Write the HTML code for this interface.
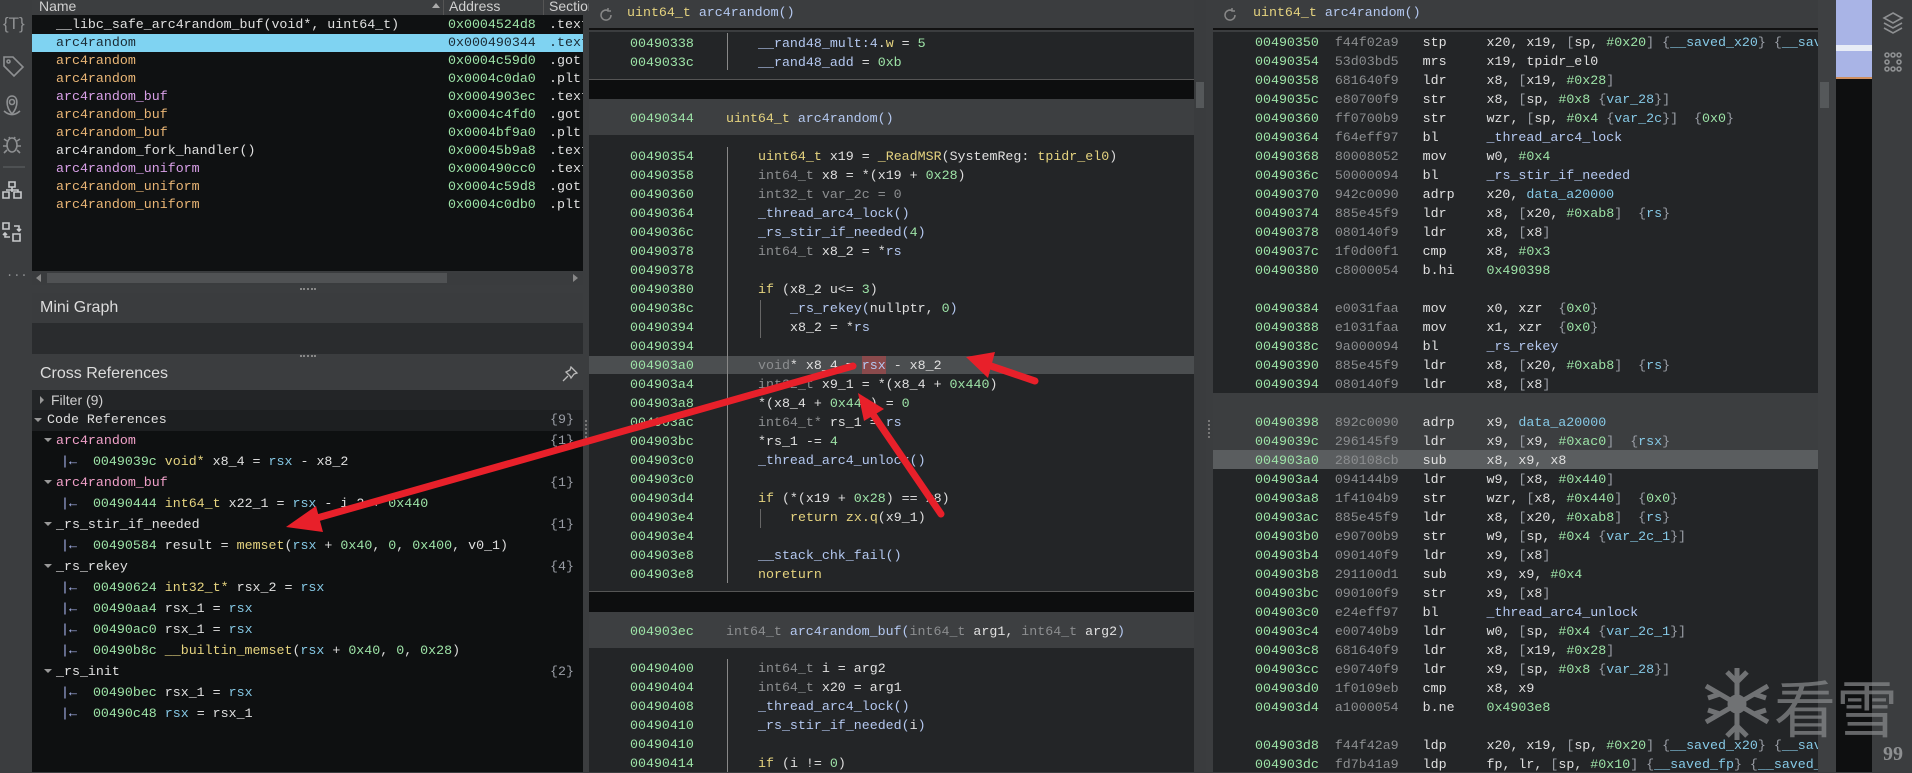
<!DOCTYPE html>
<html><head><meta charset="utf-8"><style>
*{margin:0;padding:0;box-sizing:border-box}
body{width:1912px;height:772px;overflow:hidden;background:#3b3d3f;position:relative;font-family:"Liberation Mono",monospace;font-size:13.3px;color:#dcdcdc}
.a{position:absolute}
.l{position:absolute;white-space:pre;line-height:19px;height:19px}
.s{font-family:"Liberation Sans",sans-serif}
.g{color:#9de3a7}.y{color:#e5d37f}.b{color:#b4c8f0}.w{color:#e0e0e0}.d{color:#8c8e90}.c{color:#86c9e6}.o{color:#eab676}.p{color:#d9a0e8}.k{color:#9a9ea6}.r{color:#f0a0c8}
#rp .d{margin-right:8px}
</style></head><body>

<div class="a" style="left:0;top:0;width:32px;height:772px;background:#3b3d3f"></div>
<svg class="a" style="left:0;top:0" width="32" height="290" fill="none" stroke="#8e9092" stroke-width="1.6">
<text x="3" y="29" fill="#8e9092" stroke="none" font-family="Liberation Sans" font-size="17">{T}</text>
<path d="M4 57 L4 66 L14 76 L23 67 L13 57 Z"/><circle cx="8.5" cy="61.5" r="1.5"/>
<path d="M12 114 C5 106 6 96 12 96 C18 96 19 106 12 114 Z"/><circle cx="12" cy="102" r="2.5"/><path d="M4 111 Q12 118 20 111"/>
<ellipse cx="12" cy="145" rx="5" ry="7"/><path d="M4 139 L7 141 M20 139 L17 141 M3 146 H7 M21 146 H17 M4 153 L7 150 M20 153 L17 150 M9 137 L10 139 M15 137 L14 139"/>
<path d="M3 167 H25" stroke="#55585a"/>
<path d="M9 182 h6 v5 h-6z M3 192 h6 v6 h-6z M14 192 h7 v6 h-7z M12 187 v5 M6 190 h12 v2" stroke="#c8cacc"/>
<path d="M3 223 h6 v6 h-6z M13 234 h7 v7 h-7z M14 226 h5 v5 M17 229 l2 2 2-2 M10 237 h-5 v-4 M3 235 l2-2 2 2" stroke="#c8cacc"/>
<text x="6" y="276" fill="#8e9092" stroke="none" font-size="12">...</text>
</svg>

<div class="a" style="left:32px;top:0;width:551px;height:15px;background:#3c3e40"></div>
<div class="l s" style="left:39px;top:-3px;font-size:14px;color:#d0d0d0">Name</div>
<div class="a" style="left:432px;top:3px;width:0;height:0;border-left:4px solid transparent;border-right:4px solid transparent;border-bottom:5px solid #aaa"></div>
<div class="a" style="left:443px;top:0;width:1px;height:15px;background:#555"></div>
<div class="l s" style="left:449px;top:-3px;font-size:14px;color:#d0d0d0">Address</div>
<div class="a" style="left:543px;top:0;width:1px;height:15px;background:#555"></div>
<div class="l s" style="left:549px;top:-3px;font-size:14px;color:#d0d0d0">Section</div>
<div class="a" style="left:32px;top:15px;width:551px;height:256px;background:#0f1112;overflow:hidden">
<div class="a" style="left:0;top:19px;width:551px;height:18px;background:#7fd3f2"></div>
<div class="l w" style="left:24px;top:0">__libc_safe_arc4random_buf(void*, uint64_t)</div>
<div class="l" style="left:24px;top:18px;color:#1a2a33">arc4random</div>
<div class="l o" style="left:24px;top:36px">arc4random</div>
<div class="l o" style="left:24px;top:54px">arc4random</div>
<div class="l p" style="left:24px;top:72px">arc4random_buf</div>
<div class="l o" style="left:24px;top:90px">arc4random_buf</div>
<div class="l o" style="left:24px;top:108px">arc4random_buf</div>
<div class="l w" style="left:24px;top:126px">arc4random_fork_handler()</div>
<div class="l p" style="left:24px;top:144px">arc4random_uniform</div>
<div class="l o" style="left:24px;top:162px">arc4random_uniform</div>
<div class="l o" style="left:24px;top:180px">arc4random_uniform</div>
<div class="l g" style="left:416px;top:0">0x0004524d8</div>
<div class="l" style="left:416px;top:18px;color:#1a2a33">0x000490344</div>
<div class="l g" style="left:416px;top:36px">0x0004c59d0</div>
<div class="l g" style="left:416px;top:54px">0x0004c0da0</div>
<div class="l g" style="left:416px;top:72px">0x0004903ec</div>
<div class="l g" style="left:416px;top:90px">0x0004c4fd0</div>
<div class="l g" style="left:416px;top:108px">0x0004bf9a0</div>
<div class="l g" style="left:416px;top:126px">0x00045b9a8</div>
<div class="l g" style="left:416px;top:144px">0x000490cc0</div>
<div class="l g" style="left:416px;top:162px">0x0004c59d8</div>
<div class="l g" style="left:416px;top:180px">0x0004c0db0</div>
<div class="l w" style="left:517px;top:0">.text</div>
<div class="l" style="left:517px;top:18px;color:#1a2a33">.text</div>
<div class="l w" style="left:517px;top:36px">.got</div>
<div class="l w" style="left:517px;top:54px">.plt</div>
<div class="l w" style="left:517px;top:72px">.text</div>
<div class="l w" style="left:517px;top:90px">.got</div>
<div class="l w" style="left:517px;top:108px">.plt</div>
<div class="l w" style="left:517px;top:126px">.text</div>
<div class="l w" style="left:517px;top:144px">.text</div>
<div class="l w" style="left:517px;top:162px">.got</div>
<div class="l w" style="left:517px;top:180px">.plt</div>
</div>
<div class="a" style="left:32px;top:271px;width:551px;height:14px;background:#3a3c3e"></div>
<div class="a" style="left:47px;top:273px;width:400px;height:10px;background:#505254"></div>
<div class="a" style="left:36px;top:274px;border-right:5px solid #888;border-top:4px solid transparent;border-bottom:4px solid transparent"></div>
<div class="a" style="left:573px;top:274px;border-left:5px solid #888;border-top:4px solid transparent;border-bottom:4px solid transparent"></div>
<div class="a" style="left:300px;top:288px;width:16px;height:2px;border-top:2px dotted #888"></div>
<div class="a" style="left:32px;top:293px;width:551px;height:30px;background:#3a3c3e"></div>
<div class="l s" style="left:40px;top:298px;font-size:16px;color:#dcdcdc">Mini Graph</div>
<div class="a" style="left:32px;top:323px;width:551px;height:31px;background:#2a2c2e"></div>
<div class="a" style="left:300px;top:355px;width:16px;height:2px;border-top:2px dotted #888"></div>
<div class="l s" style="left:40px;top:364px;font-size:16px;color:#dcdcdc">Cross References</div>
<svg class="a" style="left:562px;top:366px" width="16" height="16" fill="none" stroke="#bbb" stroke-width="1.3"><path d="M9 1 L15 7 L12 8 L9 12 L8 10 L4 6 L8 4 Z M6 10 L1 15"/></svg>
<div class="a" style="left:32px;top:390px;width:551px;height:20px;background:#232527"></div>
<div class="a" style="left:40px;top:396px;border-left:4px solid #999;border-top:4px solid transparent;border-bottom:4px solid transparent"></div>
<div class="l s" style="left:51px;top:391px;font-size:14px;color:#d0d0d0">Filter (9)</div>
<div class="a" style="left:32px;top:410px;width:551px;height:21px;background:#1d1f21"></div>
<div class="a" style="left:34px;top:418px;border-top:4px solid #999;border-left:4px solid transparent;border-right:4px solid transparent"></div>
<div class="l w" style="left:47px;top:410px">Code References</div>
<div class="l k" style="left:550px;top:410px">{9}</div>
<div class="a" style="left:32px;top:431px;width:551px;height:341px;background:#0e1011"></div>
<div class="a" style="left:0;top:0">
<div class="l r" style="left:56px;top:431px">arc4random</div><div class="l k" style="left:550px;top:431px">{1}</div>
<div class="l" style="left:61px;top:452px"><span style="color:#a9b6f0">|←</span>  <span class="g">0049039c</span> <span class="y">void*</span> <span class="w">x8_4</span> = <span class="c">rsx</span> - <span class="w">x8_2</span></div>
<div class="l r" style="left:56px;top:473px">arc4random_buf</div><div class="l k" style="left:550px;top:473px">{1}</div>
<div class="l" style="left:61px;top:494px"><span style="color:#a9b6f0">|←</span>  <span class="g">00490444</span> <span class="y">int64_t</span> <span class="w">x22_1</span> = <span class="c">rsx</span> - <span class="w">i_2</span> + <span class="g">0x440</span></div>
<div class="l w" style="left:56px;top:515px">_rs_stir_if_needed</div><div class="l k" style="left:550px;top:515px">{1}</div>
<div class="l" style="left:61px;top:536px"><span style="color:#a9b6f0">|←</span>  <span class="g">00490584</span> <span class="w">result</span> = <span class="y">memset</span>(<span class="c">rsx</span> + <span class="g">0x40</span>, <span class="g">0</span>, <span class="g">0x400</span>, <span class="w">v0_1</span>)</div>
<div class="l w" style="left:56px;top:557px">_rs_rekey</div><div class="l k" style="left:550px;top:557px">{4}</div>
<div class="l" style="left:61px;top:578px"><span style="color:#a9b6f0">|←</span>  <span class="g">00490624</span> <span class="y">int32_t*</span> <span class="w">rsx_2</span> = <span class="c">rsx</span></div>
<div class="l" style="left:61px;top:599px"><span style="color:#a9b6f0">|←</span>  <span class="g">00490aa4</span> <span class="w">rsx_1</span> = <span class="c">rsx</span></div>
<div class="l" style="left:61px;top:620px"><span style="color:#a9b6f0">|←</span>  <span class="g">00490ac0</span> <span class="w">rsx_1</span> = <span class="c">rsx</span></div>
<div class="l" style="left:61px;top:641px"><span style="color:#a9b6f0">|←</span>  <span class="g">00490b8c</span> <span class="y">__builtin_memset</span>(<span class="c">rsx</span> + <span class="g">0x40</span>, <span class="g">0</span>, <span class="g">0x28</span>)</div>
<div class="l w" style="left:56px;top:662px">_rs_init</div><div class="l k" style="left:550px;top:662px">{2}</div>
<div class="l" style="left:61px;top:683px"><span style="color:#a9b6f0">|←</span>  <span class="g">00490bec</span> <span class="w">rsx_1</span> = <span class="c">rsx</span></div>
<div class="l" style="left:61px;top:704px"><span style="color:#a9b6f0">|←</span>  <span class="g">00490c48</span> <span class="c">rsx</span> = <span class="w">rsx_1</span></div>
</div>
<svg class="a" style="left:0;top:0" width="60" height="772"><g fill="#999">
<path d="M44 438 l4 4 4-4z M44 480 l4 4 4-4z M44 522 l4 4 4-4z M44 564 l4 4 4-4z M44 669 l4 4 4-4z"/></g></svg>

<div class="a" style="left:589px;top:0;width:605px;height:30px;background:#3b3d3f;border-bottom:2px solid #111"></div>
<svg class="a" style="left:598px;top:7px" width="16" height="16" fill="none" stroke="#888" stroke-width="1.5"><path d="M13 8 A5 5 0 1 1 10 3.5 M10 1 v3 h3"/></svg>
<div class="l" style="left:627px;top:3px"><span class="y">uint64_t</span> <span class="b">arc4random()</span></div>
<div class="a" style="left:589px;top:32px;width:605px;height:740px;background:#232527"></div>
<div class="a" style="left:589px;top:79px;width:605px;height:20px;background:#0d0e0f;border-top:1px solid #555"></div>
<div class="a" style="left:589px;top:99px;width:605px;height:36px;background:#3d3f41"></div>
<div class="a" style="left:589px;top:591px;width:605px;height:21px;background:#0d0e0f;border-top:1px solid #555"></div>
<div class="a" style="left:589px;top:612px;width:605px;height:36px;background:#3d3f41"></div>
<div class="a" style="left:589px;top:356px;width:605px;height:18px;background:#4b4e50"></div>
<div class="a" style="left:727px;top:33px;width:1px;height:37px;background:#888"></div>
<div class="a" style="left:727px;top:147px;width:1px;height:436px;background:#888"></div>
<div class="a" style="left:727px;top:659px;width:1px;height:113px;background:#888"></div>
<div class="a" style="left:760px;top:300px;width:1px;height:38px;background:#666"></div>
<div class="a" style="left:760px;top:509px;width:1px;height:19px;background:#666"></div>
<div class="a" style="left:862px;top:356px;width:24px;height:18px;background:#8a4a4c"></div>
<div class="a" style="left:0;top:0">
<div class="l g" style="left:630px;top:34px">00490338</div><div class="l" style="left:758px;top:34px"><span class="b">__rand48_mult:4</span>.<span class="y">w</span> = <span class="g">5</span></div>
<div class="l g" style="left:630px;top:53px">0049033c</div><div class="l" style="left:758px;top:53px"><span class="b">__rand48_add</span> = <span class="g">0xb</span></div>
<div class="l g" style="left:630px;top:109px">00490344</div><div class="l" style="left:726px;top:109px"><span class="y">uint64_t</span> <span class="b">arc4random()</span></div>
<div class="l g" style="left:630px;top:147px">00490354</div><div class="l" style="left:758px;top:147px"><span class="y">uint64_t</span> <span class="w">x19</span> = <span class="y">_ReadMSR</span>(<span class="w">SystemReg</span>: <span class="y">tpidr_el0</span>)</div>
<div class="l g" style="left:630px;top:166px">00490358</div><div class="l" style="left:758px;top:166px"><span class="d">int64_t</span> <span class="w">x8</span> = *(<span class="w">x19</span> + <span class="g">0x28</span>)</div>
<div class="l g" style="left:630px;top:185px">00490360</div><div class="l d" style="left:758px;top:185px">int32_t var_2c = 0</div>
<div class="l g" style="left:630px;top:204px">00490364</div><div class="l b" style="left:758px;top:204px">_thread_arc4_lock()</div>
<div class="l g" style="left:630px;top:223px">0049036c</div><div class="l" style="left:758px;top:223px"><span class="b">_rs_stir_if_needed(</span><span class="g">4</span><span class="b">)</span></div>
<div class="l g" style="left:630px;top:242px">00490378</div><div class="l" style="left:758px;top:242px"><span class="d">int64_t</span> <span class="w">x8_2</span> = *<span class="b">rs</span></div>
<div class="l g" style="left:630px;top:261px">00490378</div>
<div class="l g" style="left:630px;top:280px">00490380</div><div class="l" style="left:758px;top:280px"><span class="y">if</span> (<span class="w">x8_2</span> u&lt;= <span class="g">3</span>)</div>
<div class="l g" style="left:630px;top:299px">0049038c</div><div class="l" style="left:790px;top:299px"><span class="b">_rs_rekey(</span><span class="w">nullptr</span>, <span class="g">0</span><span class="b">)</span></div>
<div class="l g" style="left:630px;top:318px">00490394</div><div class="l" style="left:790px;top:318px"><span class="w">x8_2</span> = *<span class="b">rs</span></div>
<div class="l g" style="left:630px;top:337px">00490394</div>
<div class="l g" style="left:630px;top:356px">004903a0</div><div class="l" style="left:758px;top:356px"><span class="d">void</span>* <span class="w">x8_4</span> = <span class="b">rsx</span> - <span class="w">x8_2</span></div>
<div class="l g" style="left:630px;top:375px">004903a4</div><div class="l" style="left:758px;top:375px"><span class="d">int32_t</span> <span class="w">x9_1</span> = *(<span class="w">x8_4</span> + <span class="g">0x440</span>)</div>
<div class="l g" style="left:630px;top:394px">004903a8</div><div class="l" style="left:758px;top:394px">*(<span class="w">x8_4</span> + <span class="g">0x440</span>) = <span class="g">0</span></div>
<div class="l g" style="left:630px;top:413px">004903ac</div><div class="l" style="left:758px;top:413px"><span class="d">int64_t*</span> <span class="w">rs_1</span> = <span class="b">rs</span></div>
<div class="l g" style="left:630px;top:432px">004903bc</div><div class="l" style="left:758px;top:432px">*<span class="w">rs_1</span> -= <span class="g">4</span></div>
<div class="l g" style="left:630px;top:451px">004903c0</div><div class="l b" style="left:758px;top:451px">_thread_arc4_unlock()</div>
<div class="l g" style="left:630px;top:470px">004903c0</div>
<div class="l g" style="left:630px;top:489px">004903d4</div><div class="l" style="left:758px;top:489px"><span class="y">if</span> (*(<span class="w">x19</span> + <span class="g">0x28</span>) == <span class="w">x8</span>)</div>
<div class="l g" style="left:630px;top:508px">004903e4</div><div class="l" style="left:790px;top:508px"><span class="y">return</span> <span class="y">zx.q</span>(<span class="w">x9_1</span>)</div>
<div class="l g" style="left:630px;top:527px">004903e4</div>
<div class="l g" style="left:630px;top:546px">004903e8</div><div class="l b" style="left:758px;top:546px">__stack_chk_fail()</div>
<div class="l g" style="left:630px;top:565px">004903e8</div><div class="l y" style="left:758px;top:565px">noreturn</div>
<div class="l g" style="left:630px;top:622px">004903ec</div><div class="l" style="left:726px;top:622px"><span class="d">int64_t</span> <span class="b">arc4random_buf(</span><span class="d">int64_t</span> <span class="w">arg1</span>, <span class="d">int64_t</span> <span class="w">arg2</span><span class="b">)</span></div>
<div class="l g" style="left:630px;top:659px">00490400</div><div class="l" style="left:758px;top:659px"><span class="d">int64_t</span> <span class="w">i</span> = <span class="w">arg2</span></div>
<div class="l g" style="left:630px;top:678px">00490404</div><div class="l" style="left:758px;top:678px"><span class="d">int64_t</span> <span class="w">x20</span> = <span class="w">arg1</span></div>
<div class="l g" style="left:630px;top:697px">00490408</div><div class="l b" style="left:758px;top:697px">_thread_arc4_lock()</div>
<div class="l g" style="left:630px;top:716px">00490410</div><div class="l" style="left:758px;top:716px"><span class="b">_rs_stir_if_needed(</span><span class="w">i</span><span class="b">)</span></div>
<div class="l g" style="left:630px;top:735px">00490410</div>
<div class="l g" style="left:630px;top:754px">00490414</div><div class="l" style="left:758px;top:754px"><span class="y">if</span> (<span class="w">i</span> != <span class="g">0</span>)</div>
</div>
<div class="a" style="left:1194px;top:0;width:12px;height:772px;background:#3a3c3e"></div>
<div class="a" style="left:1196px;top:82px;width:8px;height:26px;background:#55585a"></div>
<div class="a" style="left:1208px;top:420px;width:2px;height:18px;border-left:2px dotted #777"></div>
<div class="a" style="left:585px;top:420px;width:2px;height:18px;border-left:2px dotted #777"></div>

<div class="a" style="left:1213px;top:0;width:605px;height:30px;background:#3b3d3f;border-bottom:2px solid #111"></div>
<svg class="a" style="left:1222px;top:7px" width="16" height="16" fill="none" stroke="#888" stroke-width="1.5"><path d="M13 8 A5 5 0 1 1 10 3.5 M10 1 v3 h3"/></svg>
<div class="l" style="left:1253px;top:3px"><span class="y">uint64_t</span> <span class="b">arc4random()</span></div>
<div id="rp" class="a" style="left:1213px;top:32px;width:605px;height:740px;background:#232527;overflow:hidden">
<div class="a" style="left:0;top:361px;width:605px;height:57px;background:#3c3e40"></div>
<div class="a" style="left:0;top:418px;width:605px;height:19px;background:#5a5d5f"></div>
<div class="a" style="left:-1213px;top:-32px;">
<div class="l" style="left:1255px;top:33px"><span class="g">00490350</span>  <span class="d">f44f02a9</span>  <span class="w">stp</span>     <span class="w">x20</span>, <span class="w">x19</span>, <span class="k">[</span><span class="w">sp</span>, <span class="g">#0x20</span><span class="k">]</span> <span class="k">{</span><span class="c">__saved_x20</span><span class="k">}</span> <span class="k">{</span><span class="c">__saved_x19</span><span class="k">}</span></div>
<div class="l" style="left:1255px;top:52px"><span class="g">00490354</span>  <span class="d">53d03bd5</span>  <span class="w">mrs</span>     <span class="w">x19</span>, <span class="w">tpidr_el0</span></div>
<div class="l" style="left:1255px;top:71px"><span class="g">00490358</span>  <span class="d">681640f9</span>  <span class="w">ldr</span>     <span class="w">x8</span>, <span class="k">[</span><span class="w">x19</span>, <span class="g">#0x28</span><span class="k">]</span></div>
<div class="l" style="left:1255px;top:90px"><span class="g">0049035c</span>  <span class="d">e80700f9</span>  <span class="w">str</span>     <span class="w">x8</span>, <span class="k">[</span><span class="w">sp</span>, <span class="g">#0x8</span> <span class="k">{</span><span class="c">var_28</span><span class="k">}]</span></div>
<div class="l" style="left:1255px;top:109px"><span class="g">00490360</span>  <span class="d">ff0700b9</span>  <span class="w">str</span>     <span class="w">wzr</span>, <span class="k">[</span><span class="w">sp</span>, <span class="g">#0x4</span> <span class="k">{</span><span class="c">var_2c</span><span class="k">}]</span>  <span class="k">{</span><span class="g">0x0</span><span class="k">}</span></div>
<div class="l" style="left:1255px;top:128px"><span class="g">00490364</span>  <span class="d">f64eff97</span>  <span class="w">bl</span>      <span class="b">_thread_arc4_lock</span></div>
<div class="l" style="left:1255px;top:147px"><span class="g">00490368</span>  <span class="d">80008052</span>  <span class="w">mov</span>     <span class="w">w0</span>, <span class="g">#0x4</span></div>
<div class="l" style="left:1255px;top:166px"><span class="g">0049036c</span>  <span class="d">50000094</span>  <span class="w">bl</span>      <span class="b">_rs_stir_if_needed</span></div>
<div class="l" style="left:1255px;top:185px"><span class="g">00490370</span>  <span class="d">942c0090</span>  <span class="w">adrp</span>    <span class="w">x20</span>, <span class="c">data_a20000</span></div>
<div class="l" style="left:1255px;top:204px"><span class="g">00490374</span>  <span class="d">885e45f9</span>  <span class="w">ldr</span>     <span class="w">x8</span>, <span class="k">[</span><span class="w">x20</span>, <span class="g">#0xab8</span><span class="k">]</span>  <span class="k">{</span><span class="c">rs</span><span class="k">}</span></div>
<div class="l" style="left:1255px;top:223px"><span class="g">00490378</span>  <span class="d">080140f9</span>  <span class="w">ldr</span>     <span class="w">x8</span>, <span class="k">[</span><span class="w">x8</span><span class="k">]</span></div>
<div class="l" style="left:1255px;top:242px"><span class="g">0049037c</span>  <span class="d">1f0d00f1</span>  <span class="w">cmp</span>     <span class="w">x8</span>, <span class="g">#0x3</span></div>
<div class="l" style="left:1255px;top:261px"><span class="g">00490380</span>  <span class="d">c8000054</span>  <span class="w">b.hi</span>    <span class="g">0x490398</span></div>
<div class="l" style="left:1255px;top:299px"><span class="g">00490384</span>  <span class="d">e0031faa</span>  <span class="w">mov</span>     <span class="w">x0</span>, <span class="w">xzr</span>  <span class="k">{</span><span class="g">0x0</span><span class="k">}</span></div>
<div class="l" style="left:1255px;top:318px"><span class="g">00490388</span>  <span class="d">e1031faa</span>  <span class="w">mov</span>     <span class="w">x1</span>, <span class="w">xzr</span>  <span class="k">{</span><span class="g">0x0</span><span class="k">}</span></div>
<div class="l" style="left:1255px;top:337px"><span class="g">0049038c</span>  <span class="d">9a000094</span>  <span class="w">bl</span>      <span class="b">_rs_rekey</span></div>
<div class="l" style="left:1255px;top:356px"><span class="g">00490390</span>  <span class="d">885e45f9</span>  <span class="w">ldr</span>     <span class="w">x8</span>, <span class="k">[</span><span class="w">x20</span>, <span class="g">#0xab8</span><span class="k">]</span>  <span class="k">{</span><span class="c">rs</span><span class="k">}</span></div>
<div class="l" style="left:1255px;top:375px"><span class="g">00490394</span>  <span class="d">080140f9</span>  <span class="w">ldr</span>     <span class="w">x8</span>, <span class="k">[</span><span class="w">x8</span><span class="k">]</span></div>
<div class="l" style="left:1255px;top:413px"><span class="g">00490398</span>  <span class="d">892c0090</span>  <span class="w">adrp</span>    <span class="w">x9</span>, <span class="c">data_a20000</span></div>
<div class="l" style="left:1255px;top:432px"><span class="g">0049039c</span>  <span class="d">296145f9</span>  <span class="w">ldr</span>     <span class="w">x9</span>, <span class="k">[</span><span class="w">x9</span>, <span class="g">#0xac0</span><span class="k">]</span>  <span class="k">{</span><span class="c">rsx</span><span class="k">}</span></div>
<div class="l" style="left:1255px;top:451px"><span class="g">004903a0</span>  <span class="d">280108cb</span>  <span class="w">sub</span>     <span class="w">x8</span>, <span class="w">x9</span>, <span class="w">x8</span></div>
<div class="l" style="left:1255px;top:470px"><span class="g">004903a4</span>  <span class="d">094144b9</span>  <span class="w">ldr</span>     <span class="w">w9</span>, <span class="k">[</span><span class="w">x8</span>, <span class="g">#0x440</span><span class="k">]</span></div>
<div class="l" style="left:1255px;top:489px"><span class="g">004903a8</span>  <span class="d">1f4104b9</span>  <span class="w">str</span>     <span class="w">wzr</span>, <span class="k">[</span><span class="w">x8</span>, <span class="g">#0x440</span><span class="k">]</span>  <span class="k">{</span><span class="g">0x0</span><span class="k">}</span></div>
<div class="l" style="left:1255px;top:508px"><span class="g">004903ac</span>  <span class="d">885e45f9</span>  <span class="w">ldr</span>     <span class="w">x8</span>, <span class="k">[</span><span class="w">x20</span>, <span class="g">#0xab8</span><span class="k">]</span>  <span class="k">{</span><span class="c">rs</span><span class="k">}</span></div>
<div class="l" style="left:1255px;top:527px"><span class="g">004903b0</span>  <span class="d">e90700b9</span>  <span class="w">str</span>     <span class="w">w9</span>, <span class="k">[</span><span class="w">sp</span>, <span class="g">#0x4</span> <span class="k">{</span><span class="c">var_2c_1</span><span class="k">}]</span></div>
<div class="l" style="left:1255px;top:546px"><span class="g">004903b4</span>  <span class="d">090140f9</span>  <span class="w">ldr</span>     <span class="w">x9</span>, <span class="k">[</span><span class="w">x8</span><span class="k">]</span></div>
<div class="l" style="left:1255px;top:565px"><span class="g">004903b8</span>  <span class="d">291100d1</span>  <span class="w">sub</span>     <span class="w">x9</span>, <span class="w">x9</span>, <span class="g">#0x4</span></div>
<div class="l" style="left:1255px;top:584px"><span class="g">004903bc</span>  <span class="d">090100f9</span>  <span class="w">str</span>     <span class="w">x9</span>, <span class="k">[</span><span class="w">x8</span><span class="k">]</span></div>
<div class="l" style="left:1255px;top:603px"><span class="g">004903c0</span>  <span class="d">e24eff97</span>  <span class="w">bl</span>      <span class="b">_thread_arc4_unlock</span></div>
<div class="l" style="left:1255px;top:622px"><span class="g">004903c4</span>  <span class="d">e00740b9</span>  <span class="w">ldr</span>     <span class="w">w0</span>, <span class="k">[</span><span class="w">sp</span>, <span class="g">#0x4</span> <span class="k">{</span><span class="c">var_2c_1</span><span class="k">}]</span></div>
<div class="l" style="left:1255px;top:641px"><span class="g">004903c8</span>  <span class="d">681640f9</span>  <span class="w">ldr</span>     <span class="w">x8</span>, <span class="k">[</span><span class="w">x19</span>, <span class="g">#0x28</span><span class="k">]</span></div>
<div class="l" style="left:1255px;top:660px"><span class="g">004903cc</span>  <span class="d">e90740f9</span>  <span class="w">ldr</span>     <span class="w">x9</span>, <span class="k">[</span><span class="w">sp</span>, <span class="g">#0x8</span> <span class="k">{</span><span class="c">var_28</span><span class="k">}]</span></div>
<div class="l" style="left:1255px;top:679px"><span class="g">004903d0</span>  <span class="d">1f0109eb</span>  <span class="w">cmp</span>     <span class="w">x8</span>, <span class="w">x9</span></div>
<div class="l" style="left:1255px;top:698px"><span class="g">004903d4</span>  <span class="d">a1000054</span>  <span class="w">b.ne</span>    <span class="g">0x4903e8</span></div>
<div class="l" style="left:1255px;top:736px"><span class="g">004903d8</span>  <span class="d">f44f42a9</span>  <span class="w">ldp</span>     <span class="w">x20</span>, <span class="w">x19</span>, <span class="k">[</span><span class="w">sp</span>, <span class="g">#0x20</span><span class="k">]</span> <span class="k">{</span><span class="c">__saved_x20</span><span class="k">}</span> <span class="k">{</span><span class="c">__saved_x19</span><span class="k">}</span></div>
<div class="l" style="left:1255px;top:755px"><span class="g">004903dc</span>  <span class="d">fd7b41a9</span>  <span class="w">ldp</span>     <span class="w">fp</span>, <span class="w">lr</span>, <span class="k">[</span><span class="w">sp</span>, <span class="g">#0x10</span><span class="k">]</span> <span class="k">{</span><span class="c">__saved_fp</span><span class="k">}</span> <span class="k">{</span><span class="c">__saved_lr</span><span class="k">}</span></div>
</div>
</div>
<div class="a" style="left:1818px;top:0;width:18px;height:772px;background:#3e4042"></div>
<div class="a" style="left:1820px;top:82px;width:9px;height:26px;background:#55585a"></div>
<div class="a" style="left:1836px;top:0;width:36px;height:772px;background:#0e0f10"></div>
<div class="a" style="left:1836px;top:0;width:36px;height:78px;background:#a9b4e6"></div>
<div class="a" style="left:1836px;top:45px;width:36px;height:6px;background:#e8ecf6"></div>
<div class="a" style="left:1836px;top:77px;width:36px;height:2px;background:#d09060"></div>
<div class="a" style="left:1872px;top:0;width:40px;height:772px;background:#3b3d3f"></div>
<svg class="a" style="left:1872px;top:0" width="40" height="772" fill="none" stroke="#8e9092" stroke-width="1.6">
<path d="M21 13 L30 18 L21 23 L12 18 Z M12 23 L21 28 L30 23 M12 28 L21 33 L30 28"/>
<circle cx="15" cy="55" r="2"/><circle cx="21" cy="55" r="2"/><circle cx="27" cy="55" r="2"/><circle cx="15" cy="62" r="2"/><circle cx="27" cy="62" r="2"/><circle cx="15" cy="69" r="2"/><circle cx="21" cy="69" r="2"/><circle cx="27" cy="69" r="2"/>
<text x="11" y="760" fill="#8e9092" stroke="none" font-size="20" font-family="Liberation Serif" font-weight="bold">99</text>
</svg>

<svg class="a" style="left:1700px;top:664px" width="200" height="80">
<g stroke="#8a8c8e" stroke-width="5" fill="none" opacity="0.75">
<path d="M37 4 V76 M6 22 L68 58 M6 58 L68 22 M27 8 L37 18 L47 8 M27 72 L37 62 L47 72 M8 34 L20 30 M66 46 L54 50 M8 46 L20 50 M66 34 L54 30"/>
<circle cx="37" cy="40" r="7"/>
</g>
<text x="74" y="68" fill="#8a8c8e" opacity="0.7" font-size="62" font-family="Noto Sans CJK SC, sans-serif">看雪</text>
</svg>

<svg class="a" style="left:0;top:0" width="1912" height="772">
<g stroke="#e8202a" stroke-width="7" stroke-linecap="round" fill="#e8202a">
<line x1="1035" y1="381" x2="985" y2="364"/>
<line x1="853" y1="366" x2="310" y2="520"/>
<line x1="941" y1="514" x2="870" y2="410"/>
</g>
<g fill="#e8202a">
<polygon points="966,357 995,352 988,378"/>
<polygon points="286,527 316,506 323,532"/>
<polygon points="858,393 884,409 864,421"/>
</g>
</svg>
</body></html>
